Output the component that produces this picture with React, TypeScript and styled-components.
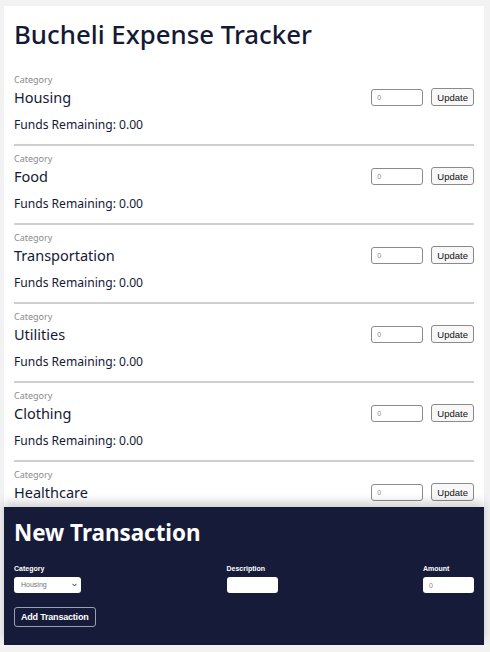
import React from "react";
import styled, { createGlobalStyle } from "styled-components";

const Global = createGlobalStyle`
  html, body { margin: 0; padding: 0; background: #f2f2f2; }
  body { font-family: "Noto Sans", "Open Sans", sans-serif; }
  * { box-sizing: border-box; }
`;

const Frame = styled.div`
  margin: 6px 6px 0 4px;
  height: 639px;
  display: flex;
  flex-direction: column;
  background: #ffffff;
`;

const ListArea = styled.div`
  flex: 1;
  overflow: hidden;
  padding: 0 10px;
`;

const Title = styled.h1`
  margin: 12px 0 24px;
  font-size: 25.8px;
  line-height: 32px;
  font-weight: 500;
  color: #141a35;
`;

const Section = styled.section<{ $first?: boolean }>`
  padding-top: ${(p) => (p.$first ? 0 : 7)}px;
  border-bottom: 2px solid #cfcfcf;
`;

const SmallLabel = styled.div`
  font-size: 9px;
  line-height: 12px;
  color: #8a8a8a;
`;

const Row = styled.div`
  margin-top: 1px;
  height: 20px;
  display: flex;
  align-items: center;
  justify-content: space-between;
`;

const Name = styled.div`
  font-size: 14.5px;
  line-height: 20px;
  color: #141a35;
`;

const Controls = styled.div`
  display: flex;
  align-items: center;
  gap: 8px;
`;

const SmallInput = styled.input`
  width: 52px;
  height: 17px;
  border: 1px solid #8a8a8a;
  border-radius: 3px;
  padding: 0 5px;
  font-size: 7px;
  font-family: "Liberation Sans", Arial, sans-serif;
  color: #555;
  background: #fff;
  outline: none;
  &::placeholder { color: #888; }
`;

const UpdateButton = styled.button`
  height: 18px;
  padding: 0 5px;
  border: 1px solid #8a8a8a;
  border-radius: 3px;
  background: #f8f8f8;
  font-family: "Liberation Sans", Arial, sans-serif;
  font-size: 9.5px;
  color: #111;
  cursor: pointer;
`;

const Funds = styled.div`
  margin-top: 10px;
  margin-bottom: 11px;
  font-size: 12.1px;
  line-height: 16px;
  color: #141a35;
`;

const Footer = styled.div`
  position: relative;
  z-index: 1;
  height: 138px;
  flex: none;
  background: #161b39;
  padding: 11px 10px 0;
  box-shadow: 0 -5px 9px rgba(0, 0, 0, 0.18);
  color: #fff;
`;

const FooterTitle = styled.h2`
  margin: 0;
  font-size: 22.4px;
  line-height: 30px;
  font-weight: 700;
`;

const Fields = styled.div`
  margin-top: 16px;
  display: flex;
  justify-content: space-between;
  align-items: flex-start;
`;

const Field = styled.div`
  display: flex;
  flex-direction: column;
  gap: 3px;
`;

const FieldLabel = styled.label`
  display: block;
  font-family: "Liberation Sans", Arial, sans-serif;
  font-size: 7px;
  line-height: 10px;
  font-weight: 700;
  color: #fff;
`;

const SelectWrap = styled.div`
  position: relative;
  width: 67px;
  height: 16px;
`;

const Select = styled.select`
  display: block;
  width: 100%;
  height: 16px;
  margin: 0;
  appearance: none;
  border: none;
  border-radius: 3px;
  background: #fff;
  padding: 0 0 0 7px;
  font-family: "Liberation Sans", Arial, sans-serif;
  font-size: 7px;
  line-height: 16px;
  color: #707070;
  outline: none;
`;

const Chevron = styled.svg`
  position: absolute;
  right: 4px;
  top: 6px;
  width: 5px;
  height: 4px;
  pointer-events: none;
`;

const FooterInput = styled.input`
  display: block;
  width: 51px;
  height: 16px;
  margin: 0;
  border: none;
  border-radius: 3px;
  background: #fff;
  padding: 0 6px;
  font-family: "Liberation Sans", Arial, sans-serif;
  font-size: 7px;
  color: #666;
  outline: none;
  &::placeholder { color: #888; }
`;

const AddButton = styled.button`
  display: block;
  margin-top: 14px;
  height: 20px;
  padding: 0 6px;
  background: transparent;
  border: 1px solid #9aa0b3;
  border-radius: 3px;
  color: #fff;
  font-family: "Liberation Sans", Arial, sans-serif;
  font-size: 9px;
  font-weight: 700;
  letter-spacing: -0.2px;
  cursor: pointer;
`;

const categories = ["Housing", "Food", "Transportation", "Utilities", "Clothing", "Healthcare"];

export default function App() {
  return (
    <>
      <Global />
      <Frame>
        <ListArea>
          <Title>Bucheli Expense Tracker</Title>
          {categories.map((c, i) => (
            <Section key={c} $first={i === 0}>
              <SmallLabel>Category</SmallLabel>
              <Row>
                <Name>{c}</Name>
                <Controls>
                  <SmallInput placeholder="0" />
                  <UpdateButton>Update</UpdateButton>
                </Controls>
              </Row>
              <Funds>Funds Remaining: 0.00</Funds>
            </Section>
          ))}
        </ListArea>
        <Footer>
          <FooterTitle>New Transaction</FooterTitle>
          <Fields>
            <Field>
              <FieldLabel>Category</FieldLabel>
              <SelectWrap>
                <Select defaultValue="Housing">
                  {categories.map((c) => (
                    <option key={c}>{c}</option>
                  ))}
                </Select>
                <Chevron viewBox="0 0 5 4">
                  <path d="M0.5 0.8 L2.5 3 L4.5 0.8" fill="none" stroke="#333" strokeWidth="1" />
                </Chevron>
              </SelectWrap>
            </Field>
            <Field>
              <FieldLabel>Description</FieldLabel>
              <FooterInput />
            </Field>
            <Field>
              <FieldLabel>Amount</FieldLabel>
              <FooterInput placeholder="0" />
            </Field>
          </Fields>
          <AddButton>Add Transaction</AddButton>
        </Footer>
      </Frame>
    </>
  );
}
